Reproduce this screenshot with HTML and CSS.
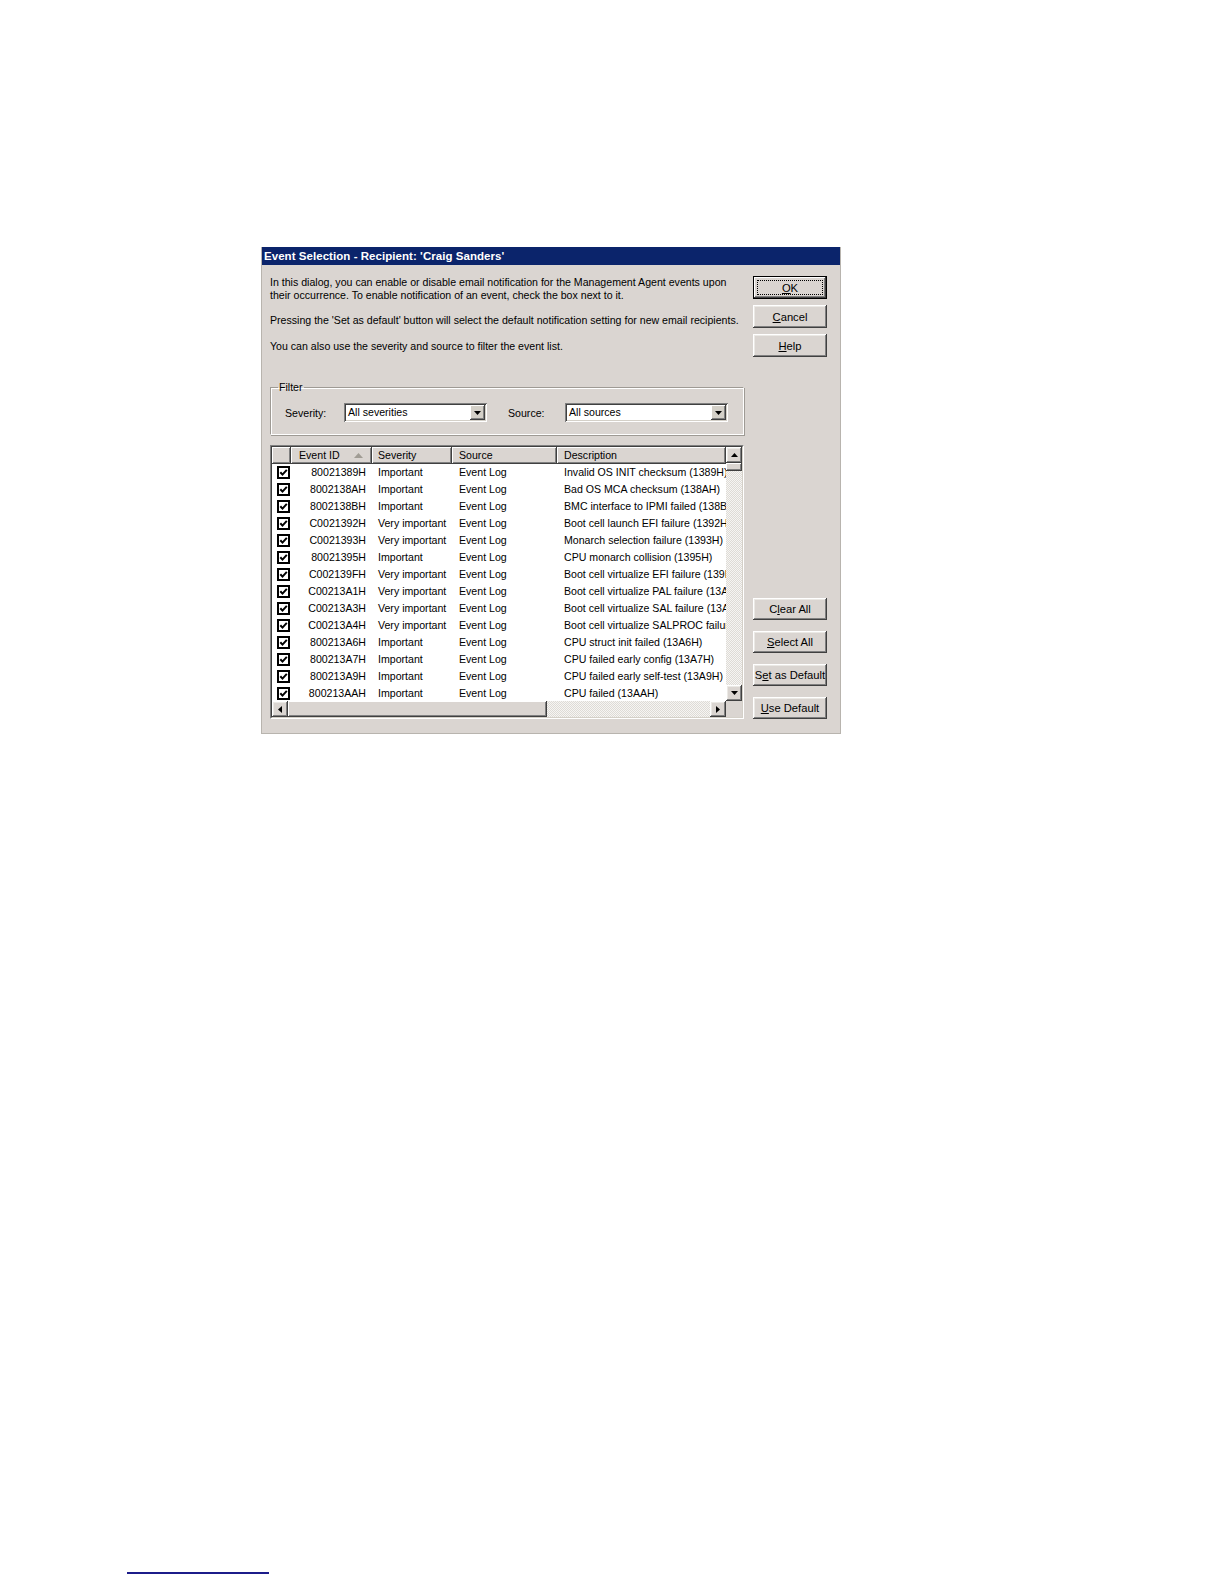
FILE: index.html
```html
<!DOCTYPE html>
<html>
<head>
<meta charset="utf-8">
<link rel="stylesheet" href="styles.css">
<title>Event Selection</title>
</head>
<body>
<div class="dialog">
  <div class="titlebar">Event Selection - Recipient: 'Craig Sanders'</div>
  <div class="content">
    <div class="main">
      <p class="intro">In this dialog, you can enable or disable email notification for the Management Agent events upon their occurrence. To enable notification of an event, check the box next to it.</p>
      <p class="intro p2">Pressing the 'Set as default' button will select the default notification setting for new email recipients.</p>
      <p class="intro p3">You can also use the severity and source to filter the event list.</p>

      <fieldset class="filter">
        <legend>Filter</legend>
        <div class="filter-row">
          <span class="flabel sev-label">Severity:</span>
          <div class="combo sev-combo"><span class="combo-text">All severities</span><span class="drop"><svg width="7" height="4" viewBox="0 0 7 4"><path d="M0 0h7L3.5 4z" fill="#000"/></svg></span></div>
          <span class="flabel src-label">Source:</span>
          <div class="combo src-combo"><span class="combo-text">All sources</span><span class="drop"><svg width="7" height="4" viewBox="0 0 7 4"><path d="M0 0h7L3.5 4z" fill="#000"/></svg></span></div>
        </div>
      </fieldset>

      <div class="list">
        <div class="list-inner">
          <div class="view">
            <div class="header">
              <div class="hcell"></div>
              <div class="hcell">Event ID<svg class="sort" width="9" height="5" viewBox="0 0 9 5"><path d="M0 5L4.5 0L9 5z" fill="#a09c94"/></svg></div>
              <div class="hcell">Severity</div>
              <div class="hcell">Source</div>
              <div class="hcell">Description</div>
            </div>
            <div class="rows" id="rows"></div>
          </div>
          <div class="vscroll">
            <div class="sbtn"><svg width="7" height="4" viewBox="0 0 7 4"><path d="M0 4L3.5 0L7 4z" fill="#000"/></svg></div>
            <div class="vthumb"></div>
            <div class="track"></div>
            <div class="sbtn"><svg width="7" height="4" viewBox="0 0 7 4"><path d="M0 0h7L3.5 4z" fill="#000"/></svg></div>
          </div>
          <div class="hscroll">
            <div class="sbtn"><svg width="4" height="7" viewBox="0 0 4 7"><path d="M4 0V7L0 3.5z" fill="#000"/></svg></div>
            <div class="hthumb"></div>
            <div class="track"></div>
            <div class="sbtn"><svg width="4" height="7" viewBox="0 0 4 7"><path d="M0 0V7L4 3.5z" fill="#000"/></svg></div>
          </div>
          <div class="corner"></div>
        </div>
      </div>
    </div>

    <div class="buttons">
      <div class="group top">
        <button class="btn default"><u>O</u>K</button>
        <button class="btn"><u>C</u>ancel</button>
        <button class="btn"><u>H</u>elp</button>
      </div>
      <div class="group bottom">
        <button class="btn">C<u>l</u>ear All</button>
        <button class="btn"><u>S</u>elect All</button>
        <button class="btn">S<u>e</u>t as Default</button>
        <button class="btn"><u>U</u>se Default</button>
      </div>
    </div>
  </div>
</div>
<div class="footnote-rule"></div>
<script src="script.js"></script>
</body>
</html>
```

FILE: script.js
```javascript
var data = [
  ["80021389H","Important","Event Log","Invalid OS INIT checksum (1389H)"],
  ["8002138AH","Important","Event Log","Bad OS MCA checksum (138AH)"],
  ["8002138BH","Important","Event Log","BMC interface to IPMI failed (138BH)"],
  ["C0021392H","Very important","Event Log","Boot cell launch EFI failure (1392H)"],
  ["C0021393H","Very important","Event Log","Monarch selection failure (1393H)"],
  ["80021395H","Important","Event Log","CPU monarch collision (1395H)"],
  ["C002139FH","Very important","Event Log","Boot cell virtualize EFI failure (139FH)"],
  ["C00213A1H","Very important","Event Log","Boot cell virtualize PAL failure (13A1H)"],
  ["C00213A3H","Very important","Event Log","Boot cell virtualize SAL failure (13A3H)"],
  ["C00213A4H","Very important","Event Log","Boot cell virtualize SALPROC failure (13A4H)"],
  ["800213A6H","Important","Event Log","CPU struct init failed (13A6H)"],
  ["800213A7H","Important","Event Log","CPU failed early config (13A7H)"],
  ["800213A9H","Important","Event Log","CPU failed early self-test (13A9H)"],
  ["800213AAH","Important","Event Log","CPU failed (13AAH)"]
];
var box = '<svg width="13" height="13" viewBox="0 0 13 13"><rect x="1" y="1" width="11" height="11" fill="#fff" stroke="#000" stroke-width="2"/><path d="M3.3 6.2L5.5 8.6L9.8 3.8" fill="none" stroke="#000" stroke-width="2"/></svg>';
var html = "";
data.forEach(function (r) {
  html += '<div class="row"><div class="cell chk">' + box + '</div>' +
    '<div class="cell id">' + r[0] + '</div>' +
    '<div class="cell">' + r[1] + '</div>' +
    '<div class="cell">' + r[2] + '</div>' +
    '<div class="cell">' + r[3] + '</div></div>';
});
document.getElementById("rows").innerHTML = html;
```

FILE: styles.css
```css
html, body {
  margin: 0;
  padding: 0;
  background: #fff;
}
body {
  font-family: "Liberation Sans", Arial, sans-serif;
  font-size: 11px;
  color: #000;
}
.dialog {
  margin: 247px 0 0 261px;
  width: 580px;
  box-sizing: border-box;
  background: #dad5d1;
  border: 1px solid #b8b4ae;
  border-top: none;
}
.titlebar {
  height: 18px;
  line-height: 18px;
  background: #0b246b;
  color: #fff;
  font-weight: bold;
  font-size: 11.5px;
  letter-spacing: 0.05px;
  padding-left: 2px;
  white-space: nowrap;
}
.content {
  display: flex;
  padding: 11px 14px 14px 8px;
}
.main {
  width: 474px;
}
.intro {
  margin: 0;
  line-height: 13px;
  font-size: 10.6px;
}
.intro.p2 { margin-top: 12px; }
.intro.p3 { margin-top: 13px; }
.filter {
  margin: 28px 0 0;
  padding: 0 6px;
  border-style: solid;
  border-width: 1px;
  border-color: #9e9a94 #fff #fff #9e9a94;
  box-shadow: inset 1px 1px #fff, 1px 1px #9e9a94;
}
.filter legend {
  padding: 0 1px;
  margin-left: 1px;
  line-height: 13px;
  font-size: 10.6px;
}
.filter-row {
  display: flex;
  align-items: center;
  padding: 9px 0 12px 8px;
}
.flabel {
  font-size: 10.6px;
}
.sev-label { width: 59px; }
.src-label { width: 57px; margin-left: 21px; }
.combo {
  height: 19px;
  box-sizing: border-box;
  background: #fff;
  display: flex;
  align-items: stretch;
  padding: 2px;
  box-shadow: inset 1px 1px #808080, inset -1px -1px #fff, inset 2px 2px #404040, inset -2px -2px #d4d0c8;
}
.sev-combo { width: 143px; }
.src-combo { width: 163px; }
.combo-text {
  flex: 1;
  font-size: 10.6px;
  line-height: 15px;
  padding-left: 2px;
  white-space: nowrap;
  overflow: hidden;
}
.drop {
  width: 15px;
  background: #d4d0c8;
  display: flex;
  align-items: center;
  justify-content: center;
  box-shadow: inset -1px -1px #404040, inset 1px 1px #fff, inset -2px -2px #808080;
}
.list {
  margin-top: 10px;
  width: 474px;
  height: 274px;
  box-sizing: border-box;
  border: 1px solid;
  border-color: #808080 #fff #fff #808080;
}
.list-inner {
  height: 100%;
  box-sizing: border-box;
  border: 1px solid;
  border-color: #404040 #d4d0c8 #d4d0c8 #404040;
  display: grid;
  grid-template-columns: 1fr 16px;
  grid-template-rows: 1fr 16px;
  background: #fff;
}
.view {
  overflow: hidden;
  min-width: 0;
  min-height: 0;
}
.header, .row {
  display: grid;
  grid-template-columns: 19px 81px 80px 105px 169px;
  white-space: nowrap;
}
.hcell {
  height: 17px;
  line-height: 17px;
  box-sizing: border-box;
  background: #dad5d1;
  box-shadow: inset -1px -1px #404040, inset 1px 1px #fff, inset -2px -2px #808080;
  padding-left: 7px;
  font-size: 10.6px;
  overflow: hidden;
  display: flex;
  align-items: center;
}
.hcell:nth-child(2) { padding-left: 8px; }
.hcell:nth-child(3) { padding-left: 6px; }
.sort {
  margin-left: 14px;
}
.row {
  height: 17px;
  line-height: 17px;
}
.cell {
  overflow: hidden;
  padding-left: 6px;
  font-size: 10.6px;
}
.cell:nth-child(4), .cell:nth-child(5) { padding-left: 7px; }
.cell.chk {
  padding-left: 5px;
  display: flex;
  align-items: center;
}
.cell.id {
  text-align: right;
  padding: 0 6px 0 0;
}
.vscroll {
  display: flex;
  flex-direction: column;
}
.hscroll {
  display: flex;
}
.sbtn {
  width: 16px;
  height: 16px;
  flex: none;
  box-sizing: border-box;
  background: #dad5d1;
  display: flex;
  align-items: center;
  justify-content: center;
  box-shadow: inset -1px -1px #404040, inset 1px 1px #fff, inset -2px -2px #808080, inset 2px 2px #ebe9e5;
}
.track {
  flex: 1;
  background: repeating-conic-gradient(#f6f5f3 0 25%, #dedbd6 0 50%) 0 0 / 2px 2px;
}
.vthumb {
  height: 8px;
  flex: none;
  background: #dad5d1;
  box-shadow: inset -1px -1px #404040, inset 1px 1px #fff, inset -2px -2px #808080;
}
.hthumb {
  width: 259px;
  flex: none;
  background: #dad5d1;
  box-shadow: inset -1px -1px #404040, inset 1px 1px #fff, inset -2px -2px #808080;
}
.corner {
  background: #dad5d1;
}
.buttons {
  width: 74px;
  margin-left: 9px;
  display: flex;
  flex-direction: column;
  justify-content: space-between;
}
.group {
  display: flex;
  flex-direction: column;
}
.group.top { gap: 6px; }
.group.top .btn { height: 23px; }
.group.bottom { gap: 11px; }
.btn {
  position: relative;
  width: 74px;
  height: 22px;
  margin: 0;
  padding: 0;
  border: none;
  background: #dad5d1;
  font-family: "Liberation Sans", Arial, sans-serif;
  font-size: 11.2px;
  color: #000;
  box-shadow: inset -1px -1px #404040, inset 1px 1px #fff, inset -2px -2px #808080, inset 2px 2px #ebe9e5;
}
.btn.default {
  box-shadow: inset 0 0 0 1px #000, inset -2px -2px #404040, inset 2px 2px #fff, inset -3px -3px #808080;
}
.btn.default::after {
  content: "";
  position: absolute;
  left: 4px;
  top: 4px;
  right: 4px;
  bottom: 4px;
  border: 1px dotted #000;
}
.footnote-rule {
  margin: 838px 0 0 127px;
  width: 142px;
  height: 2px;
  background: #1c1c8a;
}
```
